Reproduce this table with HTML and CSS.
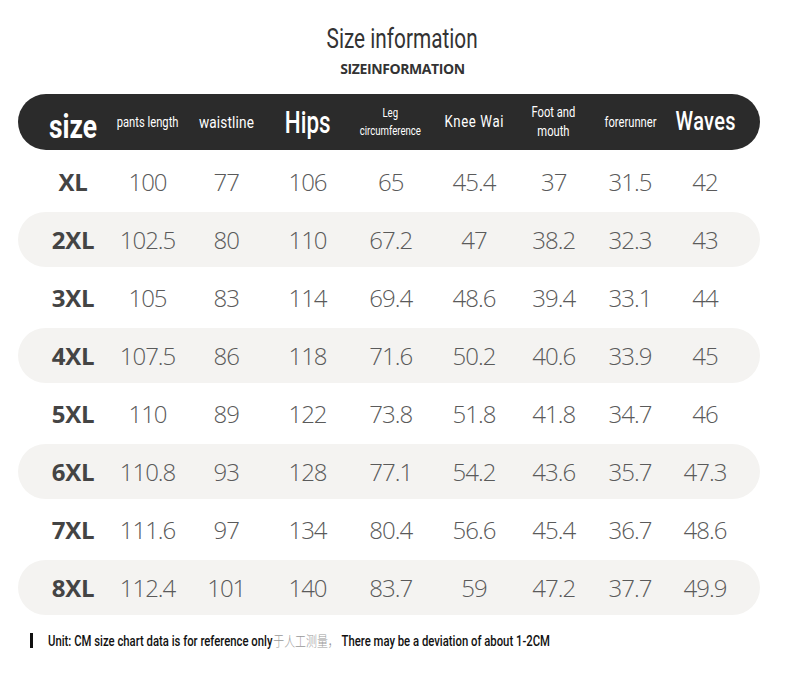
FILE: index.html
```html
<!DOCTYPE html>
<html>
<head>
<meta charset="utf-8">
<link rel="stylesheet" href="styles.css">
</head>
<body>
<div class="page">
  <header class="titles">
    <h1 class="title"><span class="cond">Size information</span></h1>
    <div class="subtitle">SIZEINFORMATION</div>
  </header>
  <div class="table">
    <div class="row head">
      <div class="h h-size"><span class="cond">size</span></div>
      <div class="h h-sm"><span class="cond">pants length</span></div>
      <div class="h h-md"><span class="cond">waistline</span></div>
      <div class="h h-hips"><span class="cond">Hips</span></div>
      <div class="h h-xs"><span class="cond">Leg<br>circumference</span></div>
      <div class="h h-knee"><span class="cond">Knee Wai</span></div>
      <div class="h h-sm2"><span class="cond">Foot and<br>mouth</span></div>
      <div class="h h-sm"><span class="cond">forerunner</span></div>
      <div class="h h-waves"><span class="cond">Waves</span></div>
    </div>
    <div class="row"><div class="sz">XL</div><div>100</div><div>77</div><div>106</div><div>65</div><div>45.4</div><div>37</div><div>31.5</div><div>42</div></div>
    <div class="row alt"><div class="sz">2XL</div><div>102.5</div><div>80</div><div>110</div><div>67.2</div><div>47</div><div>38.2</div><div>32.3</div><div>43</div></div>
    <div class="row"><div class="sz">3XL</div><div>105</div><div>83</div><div>114</div><div>69.4</div><div>48.6</div><div>39.4</div><div>33.1</div><div>44</div></div>
    <div class="row alt"><div class="sz">4XL</div><div>107.5</div><div>86</div><div>118</div><div>71.6</div><div>50.2</div><div>40.6</div><div>33.9</div><div>45</div></div>
    <div class="row"><div class="sz">5XL</div><div>110</div><div>89</div><div>122</div><div>73.8</div><div>51.8</div><div>41.8</div><div>34.7</div><div>46</div></div>
    <div class="row alt"><div class="sz">6XL</div><div>110.8</div><div>93</div><div>128</div><div>77.1</div><div>54.2</div><div>43.6</div><div>35.7</div><div>47.3</div></div>
    <div class="row"><div class="sz">7XL</div><div>111.6</div><div>97</div><div>134</div><div>80.4</div><div>56.6</div><div>45.4</div><div>36.7</div><div>48.6</div></div>
    <div class="row alt"><div class="sz">8XL</div><div>112.4</div><div>101</div><div>140</div><div>83.7</div><div>59</div><div>47.2</div><div>37.7</div><div>49.9</div></div>
  </div>
  <div class="note">
    <span class="mark"></span>
    <span class="note-text">Unit: CM size chart data is for reference only<span class="cn">于人工测量，</span> There may be a deviation of about 1-2CM</span>
  </div>
</div>
</body>
</html>
```
FILE: styles.css
```css
* { box-sizing: border-box; margin: 0; padding: 0; }
html, body { background: #fff; }
body { width: 790px; height: 675px; overflow: hidden; }
.page { padding: 24px 30px 0 18px; }
.cond { display: inline-block; transform: scaleX(0.8); transform-origin: center; white-space: nowrap; }
.titles { text-align: center; padding-left: 27px; }
.title {
  font-family: Roboto, sans-serif;
  font-weight: 400;
  font-size: 27px;
  line-height: 30px;
  color: #333;
}
.title .cond { transform: scaleX(0.77); }
.subtitle {
  font-family: "Open Sans", sans-serif;
  font-weight: 700;
  font-size: 14px;
  line-height: 16px;
  margin-top: 7px;
  color: #333;
  letter-spacing: -0.4px;
}
.table { margin-top: 17px; width: 742px; }
.row {
  display: grid;
  grid-template-columns: 72px 77px 80.5px 82px 84.5px 82px 77.5px 75px 75px;
  padding-left: 19px;
  height: 58px;
  align-items: center;
  text-align: center;
  font-family: "Open Sans", sans-serif;
  font-weight: 300;
  font-size: 24px;
  color: #5a5a5a;
  letter-spacing: -1px;
}
.row.alt {
  background: #f4f3f1;
  border-radius: 28px;
  height: 55px;
  margin: 2px 0 1px;
}
.sz { font-weight: 700; color: #444; font-size: 24px; letter-spacing: -0.2px; }
.head {
  background: #2b2b2b;
  border-radius: 28px;
  height: 56px;
  color: #fff;
  font-family: Roboto, sans-serif;
  font-weight: 400;
  letter-spacing: 0;
  margin-bottom: 2px;
}
.h { line-height: 1.2; }
.h-size { font-size: 33px; font-weight: 700; padding-top: 10px; }
.h-sm { font-size: 14px; }
.h-sm2 { font-size: 14px; line-height: 19px; }
.h-md { font-size: 17px; font-weight: 400; letter-spacing: 0.2px; }
.h-knee { font-size: 16.5px; font-weight: 400; letter-spacing: 0.8px; }
.h-hips { font-size: 32px; font-weight: 500; }
.h-hips .cond { transform: scaleX(0.7); }
.h-xs { font-size: 12px; line-height: 18px; }
.h-waves { font-size: 25px; font-weight: 500; letter-spacing: 0.4px; }
.note {
  display: flex;
  align-items: center;
  gap: 15px;
  margin-top: 15px;
  padding-left: 12px;
}
.mark { width: 3px; height: 15px; background: #111; }
.note-text {
  display: inline-block;
  transform: scaleX(0.78);
  transform-origin: left center;
  white-space: nowrap;
  font-family: Roboto, sans-serif;
  font-weight: 500;
  font-size: 14.5px;
  color: #111;
}
.cn {
  font-family: "Noto Sans CJK SC", sans-serif;
  font-size: 14px;
  color: #999;
  font-weight: 300;
  margin-left: 1px;
}
```
